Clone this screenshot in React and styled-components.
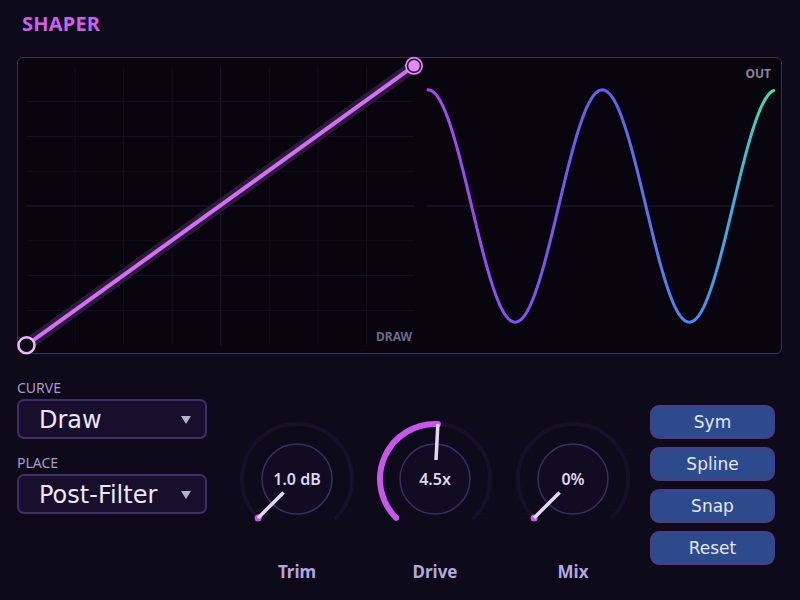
import React from "react";
import styled, { createGlobalStyle } from "styled-components";

const GlobalStyle = createGlobalStyle`
    html, body {
        margin: 0;
        padding: 0;
        background: #0d0a1a;
    }
    * {
        box-sizing: border-box;
    }
`;

const Root = styled.div`
    width: 800px;
    height: 600px;
    overflow: hidden;
    background: #0d0a1a;
    font-family: "Noto Sans", "DejaVu Sans", sans-serif;
`;

const Header = styled.div`
    height: 57px;
    padding: 12px 0 0 22px;
`;

const Title = styled.h1`
    margin: 0;
    font-size: 20px;
    line-height: 24px;
    font-weight: 700;
    letter-spacing: 0.2px;
    color: #cf5ff0;
`;

const Panel = styled.div`
    position: relative;
    margin-left: 17px;
    width: 765px;
    height: 297px;
    border: 1.5px solid #38334a;
    border-radius: 6px;
    background: #08050f;
`;

const Graph = styled.svg`
    display: block;
    width: 100%;
    height: 100%;
    overflow: visible;
`;

const Tag = styled.span`
    position: absolute;
    font-size: 12px;
    line-height: 14px;
    font-weight: 700;
    color: ${(p) => p.color};
    ${(p) => p.pos};
`;

const Bottom = styled.div`
    display: flex;
    padding-left: 17px;
`;

const Selects = styled.div`
    width: 190px;
    padding-top: 26px;
    display: flex;
    flex-direction: column;
`;

const FieldLabel = styled.div`
    font-size: 14px;
    line-height: 16px;
    color: #a89cc9;
    margin-bottom: 3px;
    margin-top: ${(p) => (p.first ? "0" : "16px")};
`;

const Select = styled.div`
    height: 40px;
    display: flex;
    align-items: center;
    justify-content: space-between;
    padding: 2px 14px 0 20px;
    border: 2px solid #3e2e6c;
    border-radius: 7px;
    background: #170f2c;
    font-family: "DejaVu Sans", sans-serif;
    font-size: 24px;
    color: #ece6f8;
`;

const Caret = styled.span`
    width: 0;
    height: 0;
    border-left: 5px solid transparent;
    border-right: 5px solid transparent;
    border-top: 8px solid #b9b0cc;
`;

const Knobs = styled.div`
    display: flex;
    gap: 18px;
    margin-left: 30px;
    padding-top: 65px;
`;

const KnobBox = styled.div`
    width: 120px;
    display: flex;
    flex-direction: column;
    align-items: center;
`;

const KnobFace = styled.div`
    position: relative;
    width: 120px;
    height: 120px;
`;

const KnobValue = styled.span`
    position: absolute;
    inset: 0;
    display: flex;
    align-items: center;
    justify-content: center;
    font-size: 16px;
    font-weight: 600;
    color: #ddd6f0;
`;

const KnobLabel = styled.div`
    margin-top: 23px;
    font-size: 17px;
    line-height: 20px;
    font-weight: 700;
    color: #b4a6df;
`;

const Buttons = styled.div`
    margin-left: 17px;
    padding-top: 51px;
    display: flex;
    flex-direction: column;
    gap: 8px;
`;

const Button = styled.button`
    width: 125px;
    height: 34px;
    border: 2px solid #4f3a88;
    border-radius: 9px;
    background: #2d4a8d;
    color: #e2e8f8;
    font-family: "DejaVu Sans", sans-serif;
    font-size: 17px;
    padding: 0;
    cursor: pointer;
`;

const OX = 18.5;
const OY = 58.5;

const polar = (cx, cy, r, deg) => {
    const a = (deg * Math.PI) / 180;
    return [cx + r * Math.sin(a), cy - r * Math.cos(a)];
};

const arc = (cx, cy, r, from, to) => {
    const [x1, y1] = polar(cx, cy, r, from);
    const [x2, y2] = polar(cx, cy, r, to);
    const large = to - from > 180 ? 1 : 0;
    return `M ${x1} ${y1} A ${r} ${r} 0 ${large} 1 ${x2} ${y2}`;
};

const sinePath = () => {
    let d = "";
    for (let x = 428; x <= 773; x += 1) {
        const y = 206 - 116 * Math.cos((2 * Math.PI * (x - 428)) / 174);
        d += (x === 428 ? "M" : "L") + x + " " + y.toFixed(2) + " ";
    }
    return d;
};

const Knob = ({ label, text, angle }) => {
    const [px1, py1] = polar(60, 60, 19, angle);
    const [px2, py2] = polar(60, 60, 55, angle);
    return (
        <KnobBox>
            <KnobFace>
                <svg width="120" height="120" style={{ overflow: "visible" }}>
                    <path d={arc(60, 60, 55, -135, 135)} fill="none" stroke="#161129" strokeWidth="4" strokeLinecap="round" />
                    {angle > -135 ? (
                        <path d={arc(60, 60, 55, -135, angle)} fill="none" stroke="#c856ec" strokeWidth="6" strokeLinecap="round" />
                    ) : (
                        <circle cx={px2} cy={py2} r="3.5" fill="#c856ec" />
                    )}
                    <circle cx="60" cy="60" r="35" fill="#110c22" stroke="#382f64" strokeWidth="1.5" />
                    <line x1={px1} y1={py1} x2={px2} y2={py2} stroke="#e2d8f4" strokeWidth="3.5" />
                </svg>
                <KnobValue>{text}</KnobValue>
            </KnobFace>
            <KnobLabel>{label}</KnobLabel>
        </KnobBox>
    );
};

const App = () => {
    const cols = [1, 2, 3, 4, 5, 6, 7].map((i) => 27 + 48.5 * i);
    const rows = [1, 2, 3, 4, 5, 6, 7].map((i) => 67 + 34.75 * i);

    return (
        <Root>
            <GlobalStyle />
            <Header>
                <Title>SHAPER</Title>
            </Header>
            <Panel>
                <Graph viewBox="0 0 762 294">
                    <defs>
                        <linearGradient id="wave" gradientUnits="userSpaceOnUse" x1="428" y1="0" x2="773" y2="0">
                            <stop offset="0" stopColor="#ac45f2" />
                            <stop offset="0.3" stopColor="#8052f2" />
                            <stop offset="0.52" stopColor="#6260f0" />
                            <stop offset="0.78" stopColor="#4a8cf0" />
                            <stop offset="0.9" stopColor="#40b4dc" />
                            <stop offset="1" stopColor="#3ee8a4" />
                        </linearGradient>
                    </defs>
                    <g transform={`translate(${-OX} ${-OY})`}>
                        {cols.map((x, i) => (
                            <line key={"c" + i} x1={x} y1="67" x2={x} y2="345" stroke={i === 3 ? "#221d2e" : "#13101b"} strokeWidth="1" />
                        ))}
                        {rows.map((y, i) => (
                            <line key={"r" + i} x1="27" y1={y} x2="414" y2={y} stroke={i === 3 ? "#241f30" : "#13101b"} strokeWidth="1" />
                        ))}
                        <line x1="427" y1="206" x2="773" y2="206" stroke="#241f30" strokeWidth="1" />
                        <line x1="27" y1="345" x2="414" y2="66" stroke="#2c1a3a" strokeWidth="12" strokeLinecap="round" />
                        <line x1="27" y1="345" x2="414" y2="66" stroke="#d270f4" strokeWidth="4" />
                        <circle cx="27" cy="345" r="8" fill="#0a0612" stroke="#f2b6ff" strokeWidth="2.5" />
                        <circle cx="414" cy="66" r="9" fill="#e48af8" />
                        <circle cx="414" cy="66" r="6.5" fill="none" stroke="#1c0b24" strokeWidth="1.5" />
                        <path d={sinePath()} fill="none" stroke="url(#wave)" strokeWidth="3" strokeLinecap="round" />
                    </g>
                </Graph>
                <Tag color="#8a8399" pos="right: 10px; top: 9px;">OUT</Tag>
                <Tag color="#6e6888" pos="left: 358px; top: 272px;">DRAW</Tag>
            </Panel>
            <Bottom>
                <Selects>
                    <FieldLabel first>CURVE</FieldLabel>
                    <Select>
                        <span>Draw</span>
                        <Caret />
                    </Select>
                    <FieldLabel>PLACE</FieldLabel>
                    <Select>
                        <span>Post-Filter</span>
                        <Caret />
                    </Select>
                </Selects>
                <Knobs>
                    <Knob label="Trim" text="1.0 dB" angle={-135} />
                    <Knob label="Drive" text="4.5x" angle={3} />
                    <Knob label="Mix" text="0%" angle={-135} />
                </Knobs>
                <Buttons>
                    <Button>Sym</Button>
                    <Button>Spline</Button>
                    <Button>Snap</Button>
                    <Button>Reset</Button>
                </Buttons>
            </Bottom>
        </Root>
    );
};

export default App;
